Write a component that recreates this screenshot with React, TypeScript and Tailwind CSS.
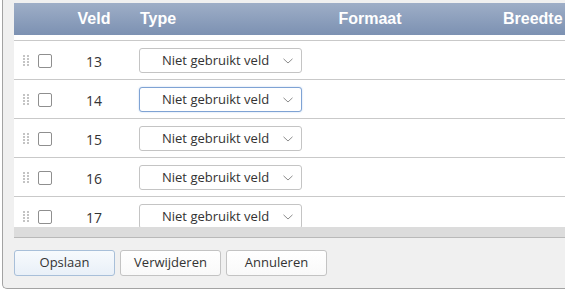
import React from "react";

const rows = [13, 14, 15, 16, 17];

function Handle() {
  return (
    <div className="grid grid-cols-2 gap-x-[2px] gap-y-[1px] w-[6px]">
      {Array.from({ length: 8 }).map((_, i) => (
        <span key={i} className="w-[2px] h-[2px] bg-[#c4c4c4]" />
      ))}
    </div>
  );
}

function Chevron() {
  return (
    <svg width="10" height="6" viewBox="0 0 10 6" fill="none">
      <path d="M0.5 0.8 L5 5 L9.5 0.8" stroke="#8c8c8c" strokeWidth="1" />
    </svg>
  );
}

function FieldRow({ nr, focused }: { nr: number; focused?: boolean }) {
  return (
    <div className="flex items-center h-[39px] shrink-0 border-b border-[#c9c9c9] pt-[1px]">
      <div className="pl-[9px] w-[24px]">
        <Handle />
      </div>
      <span className="w-[14px] h-[14px] rounded-[2px] border border-[#8f8f8f] bg-white" />
      <div className="w-[84px] text-center text-[14px] text-[#333] pt-[1px]">{nr}</div>
      <div
        className={
          "ml-[3px] w-[163px] h-[25px] rounded-[3px] border bg-white flex items-center pl-[22px] pr-[8px] text-[13px] text-[#333] " +
          (focused ? "border-[#7fa3d4] shadow-[0_0_2px_#bcd2ee]" : "border-[#c4c4c4]")
        }
      >
        <span className="flex-1 pt-[1px]">Niet gebruikt veld</span>
        <Chevron />
      </div>
    </div>
  );
}

function Button({ label, primary }: { label: string; primary?: boolean }) {
  return (
    <button
      className={
        "w-[101px] h-[26px] rounded-[3px] border text-[13px] text-[#333] " +
        (primary
          ? "border-[#a8bfd9] bg-gradient-to-b from-[#f7fafd] to-[#e9f0f8]"
          : "border-[#c3c3c3] bg-gradient-to-b from-white to-[#f9f9f9]")
      }
    >
      {label}
    </button>
  );
}

export default function App() {
  return (
    <div
      className="w-[565px] h-[290px] bg-white overflow-hidden"
      style={{ fontFamily: '"Open Sans", "Noto Sans", sans-serif' }}
    >
      <div className="ml-[2px] h-[289px] bg-[#f0f0f0] border-l border-b border-[#a3a3a3] rounded-bl-[5px] pt-[3px] pl-[11px] flex flex-col">
        <div
          className="h-[32px] shrink-0 flex items-center text-white font-bold text-[16px] bg-gradient-to-b from-[#9eaec7] to-[#7c91b2]"
          style={{ fontFamily: '"Liberation Sans", Arial, sans-serif' }}
        >
          <div className="w-[38px]" />
          <div className="w-[84px] text-center">Veld</div>
          <div className="w-[166px] pl-[4px]">Type</div>
          <div className="w-[136px] text-center">Formaat</div>
          <div className="pl-[65px] whitespace-nowrap">Breedte</div>
        </div>
        <div className="h-[192px] shrink-0 bg-white overflow-hidden flex flex-col">
          <div className="h-[6px] shrink-0 border-b border-[#c9c9c9]" />
          {rows.map((nr) => (
            <FieldRow key={nr} nr={nr} focused={nr === 14} />
          ))}
        </div>
        <div className="h-[11px] shrink-0 bg-[#dcdcdc] border-b border-[#b9b9b9]" />
        <div className="flex gap-[5px] pt-[12px]">
          <Button label="Opslaan" primary />
          <Button label="Verwijderen" />
          <Button label="Annuleren" />
        </div>
      </div>
    </div>
  );
}
